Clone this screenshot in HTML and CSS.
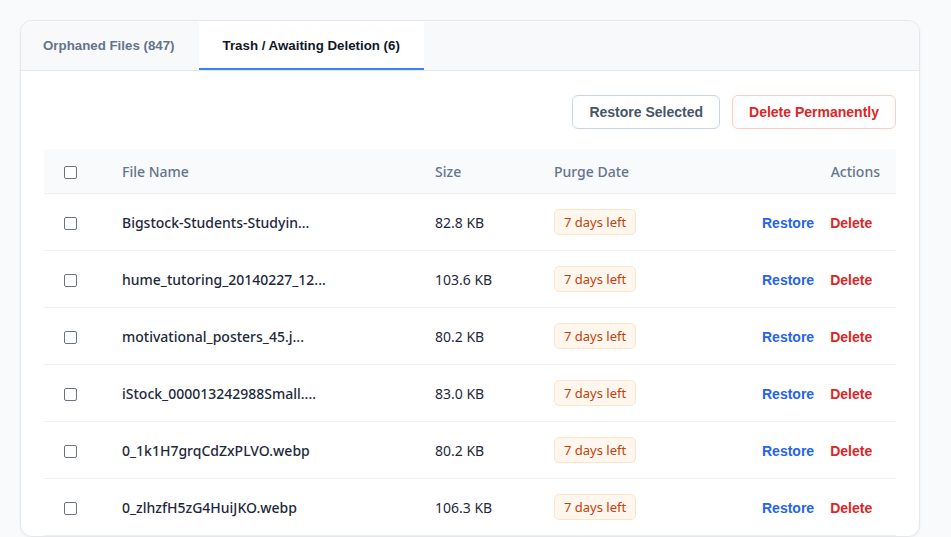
FILE: index.html
```html
<!DOCTYPE html>
<html>
<head>
<meta charset="utf-8">
<link rel="stylesheet" href="styles.css">
</head>
<body>
<div class="card">
  <div class="tabs">
    <div class="tab">Orphaned Files (847)</div>
    <div class="tab active">Trash / Awaiting Deletion (6)</div>
  </div>
  <div class="body">
    <div class="toolbar">
      <button class="btn btn-neutral">Restore Selected</button>
      <button class="btn btn-danger">Delete Permanently</button>
    </div>
    <table class="files">
      <colgroup>
        <col class="c-check"><col class="c-name"><col class="c-size"><col class="c-purge"><col>
      </colgroup>
      <thead>
        <tr><th><span class="cb"></span></th><th>File Name</th><th>Size</th><th>Purge Date</th><th class="right">Actions</th></tr>
      </thead>
      <tbody>
        <tr><td><span class="cb"></span></td><td class="name">Bigstock-Students-Studyin...</td><td class="size">82.8 KB</td><td><span class="badge">7 days left</span></td><td class="right"><a class="act restore">Restore</a><a class="act delete">Delete</a></td></tr>
        <tr><td><span class="cb"></span></td><td class="name">hume_tutoring_20140227_12...</td><td class="size">103.6 KB</td><td><span class="badge">7 days left</span></td><td class="right"><a class="act restore">Restore</a><a class="act delete">Delete</a></td></tr>
        <tr><td><span class="cb"></span></td><td class="name">motivational_posters_45.j...</td><td class="size">80.2 KB</td><td><span class="badge">7 days left</span></td><td class="right"><a class="act restore">Restore</a><a class="act delete">Delete</a></td></tr>
        <tr><td><span class="cb"></span></td><td class="name">iStock_000013242988Small....</td><td class="size">83.0 KB</td><td><span class="badge">7 days left</span></td><td class="right"><a class="act restore">Restore</a><a class="act delete">Delete</a></td></tr>
        <tr><td><span class="cb"></span></td><td class="name">0_1k1H7grqCdZxPLVO.webp</td><td class="size">80.2 KB</td><td><span class="badge">7 days left</span></td><td class="right"><a class="act restore">Restore</a><a class="act delete">Delete</a></td></tr>
        <tr><td><span class="cb"></span></td><td class="name">0_zlhzfH5zG4HuiJKO.webp</td><td class="size">106.3 KB</td><td><span class="badge">7 days left</span></td><td class="right"><a class="act restore">Restore</a><a class="act delete">Delete</a></td></tr>
      </tbody>
    </table>
  </div>
</div>
</body>
</html>
```
FILE: styles.css
```css
html, body { margin: 0; padding: 0; }
body {
  background: #f9fafb;
  padding: 20px 31px 20px 20px;
  font-family: "Noto Sans", "Open Sans", sans-serif;
}
.card {
  background: #fff;
  border: 1px solid #e5e7eb;
  border-radius: 12px;
  box-shadow: 0 1px 3px rgba(0,0,0,0.05);
  overflow: hidden;
  width: 900px;
  box-sizing: border-box;
}
.tabs {
  display: flex;
  background: #f8f9fb;
  border-bottom: 1px solid #e5e7eb;
  height: 49px;
}
.tab {
  font-family: "Liberation Sans", Arial, sans-serif;
  font-weight: bold;
  font-size: 13.3px;
  color: #64748b;
  padding: 2px 24px 0 22px;
  display: flex;
  align-items: center;
  box-sizing: border-box;
  border-bottom: 2px solid transparent;
}
.tab.active {
  background: #fff;
  color: #111827;
  border-bottom-color: #3b82f6;
  padding: 2px 24px 0 24px;
}
.body { padding: 24px 23px 0 23px; }
.toolbar {
  display: flex;
  justify-content: flex-end;
  gap: 12px;
  margin-bottom: 20px;
}
.btn {
  font-family: "Liberation Sans", Arial, sans-serif;
  font-weight: bold;
  font-size: 14px;
  height: 34px;
  padding: 0 16px;
  border-radius: 6px;
  background: #fff;
  cursor: pointer;
}
.btn-neutral { color: #475569; border: 1px solid #cbd5e1; }
.btn-danger { color: #dc2626; border: 1px solid #fecaca; }
.files {
  width: 100%;
  border-collapse: collapse;
  table-layout: fixed;
}
.c-check { width: 62px; }
.c-name { width: 313px; }
.c-size { width: 119px; }
.c-purge { width: 200px; }
.files th {
  background: #f8fafc;
  height: 44px;
  text-align: left;
  font-weight: 500;
  font-size: 14px;
  color: #64748b;
  padding: 0 16px;
  border-bottom: 1px solid #eef0f3;
}
.files td {
  height: 56px;
  padding: 0 16px;
  font-size: 14px;
  color: #1e293b;
  border-bottom: 1px solid #eef0f3;
}
.files th:first-child, .files td:first-child { padding-left: 20px; }
.files .right { text-align: right; }
.name { font-weight: 500; font-size: 14.5px; white-space: nowrap; overflow: hidden; }
.size { color: #334155; }
.cb {
  display: inline-block;
  width: 11px;
  height: 11px;
  border: 1px solid #6b7280;
  border-radius: 2px;
  vertical-align: middle;
  background: #fff;
}
.badge {
  display: inline-block;
  font-size: 13px;
  color: #c2410c;
  background: #fff7ed;
  border: 1px solid #fde4c8;
  border-radius: 5px;
  padding: 3px 9px;
}
.act {
  font-family: "Liberation Sans", Arial, sans-serif;
  font-weight: bold;
  font-size: 14px;
  padding: 0 8px;
  cursor: pointer;
}
.restore { color: #2563eb; }
.delete { color: #dc2626; }
```
